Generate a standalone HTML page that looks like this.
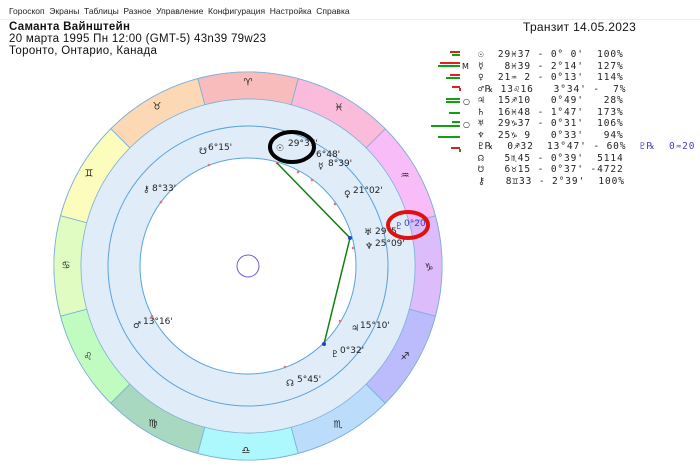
<!DOCTYPE html>
<html><head><meta charset="utf-8"><style>
html,body{margin:0;padding:0;width:700px;height:471px;overflow:hidden;background:#fff;font-family:"Liberation Sans","DejaVu Sans",sans-serif;color:#111}
.menu{position:absolute;left:9px;top:6px;font-size:8.5px;color:#222;word-spacing:2.3px;white-space:nowrap}
.mline{position:absolute;left:0;top:19px;width:700px;height:1px;background:#eee}
.hd{position:absolute;left:9px;font-size:11.5px;white-space:nowrap;letter-spacing:0.3px}
.tab{position:absolute;left:478px;top:49px;font-family:"DejaVu Sans Mono","Liberation Mono",monospace;font-size:9.5px;letter-spacing:0.9px;line-height:11.5px;white-space:pre;color:#222}
</style></head><body>
<div class="menu">Гороскоп Экраны Таблицы Разное Управление Конфигурация Настройка Справка</div>
<div class="mline"></div>
<div class="hd" style="top:21px;font-weight:bold">Саманта Вайнштейн</div>
<div class="hd" style="top:33px">20 марта 1995  Пн  12:00 (GMT-5) 43n39  79w23</div>
<div class="hd" style="top:45px">Торонто, Онтарио, Канада</div>
<div class="hd" style="left:523px;top:20px;font-size:12px">Транзит 14.05.2023</div>
<svg width="700" height="471" style="position:absolute;left:0;top:0" font-family="DejaVu Sans, sans-serif">
<circle cx="248" cy="266" r="194" fill="#e0ecf8" stroke="#7aaed8" stroke-width="1"/>
<g stroke="#7aaed8" stroke-width="0.8">
<path d="M435.4,316.2 A194,194 0 0 0 435.4,215.8 L409.3,222.8 A167,167 0 0 1 409.3,309.2Z" fill="#dcbcfa"/>
<path d="M435.4,215.8 A194,194 0 0 0 385.2,128.8 L366.1,147.9 A167,167 0 0 1 409.3,222.8Z" fill="#f8bcf8"/>
<path d="M385.2,128.8 A194,194 0 0 0 298.2,78.6 L291.2,104.7 A167,167 0 0 1 366.1,147.9Z" fill="#fbbcdc"/>
<path d="M298.2,78.6 A194,194 0 0 0 197.8,78.6 L204.8,104.7 A167,167 0 0 1 291.2,104.7Z" fill="#f8bcbc"/>
<path d="M197.8,78.6 A194,194 0 0 0 110.8,128.8 L129.9,147.9 A167,167 0 0 1 204.8,104.7Z" fill="#fcd8b4"/>
<path d="M110.8,128.8 A194,194 0 0 0 60.6,215.8 L86.7,222.8 A167,167 0 0 1 129.9,147.9Z" fill="#fcfcbc"/>
<path d="M60.6,215.8 A194,194 0 0 0 60.6,316.2 L86.7,309.2 A167,167 0 0 1 86.7,222.8Z" fill="#e0fcc0"/>
<path d="M60.6,316.2 A194,194 0 0 0 110.8,403.2 L129.9,384.1 A167,167 0 0 1 86.7,309.2Z" fill="#c0fcc0"/>
<path d="M110.8,403.2 A194,194 0 0 0 197.8,453.4 L204.8,427.3 A167,167 0 0 1 129.9,384.1Z" fill="#a8d8c0"/>
<path d="M197.8,453.4 A194,194 0 0 0 298.2,453.4 L291.2,427.3 A167,167 0 0 1 204.8,427.3Z" fill="#acf8fc"/>
<path d="M298.2,453.4 A194,194 0 0 0 385.2,403.2 L366.1,384.1 A167,167 0 0 1 291.2,427.3Z" fill="#bcdcfc"/>
<path d="M385.2,403.2 A194,194 0 0 0 435.4,316.2 L409.3,309.2 A167,167 0 0 1 366.1,384.1Z" fill="#bcbcfc"/>
</g>
<circle cx="248" cy="266" r="140" fill="none" stroke="#5aa4d8"/>
<circle cx="248" cy="266" r="108" fill="#fff" stroke="#5aa4d8"/>
<circle cx="248" cy="266" r="11" fill="none" stroke="#7060c8"/>
<g font-size="10" fill="#222" text-anchor="middle" dominant-baseline="central">
<text x="429" y="268">♑</text><text x="405" y="176">♒</text><text x="339" y="108">♓</text><text x="248" y="83">♈</text><text x="157" y="107">♉</text><text x="89" y="174">♊</text><text x="66" y="266">♋</text><text x="88" y="357">♌</text><text x="153" y="424">♍</text><text x="246" y="451">♎</text><text x="338" y="425">♏</text><text x="405" y="357">♐</text>
</g>
<g font-size="9" fill="#222">
<text x="276" y="151">☉</text><text x="288" y="146">29°37'</text>
<text x="316" y="157">6°48'</text>
<text x="318" y="169">☿</text><text x="328" y="166">8°39'</text>
<text x="344" y="197">♀</text><text x="353" y="193">21°02'</text>
<text x="364" y="235">♅</text><text x="375" y="234">29°5</text>
<text x="365" y="249">♆</text><text x="375" y="246">25°09'</text>
<text x="351" y="331">♃</text><text x="360" y="328">15°10'</text>
<text x="331" y="357">♇</text><text x="340" y="353">0°32'</text>
<text x="286" y="386">☊</text><text x="297" y="382">5°45'</text>
<text x="133" y="328">♂</text><text x="143" y="324">13°16'</text>
<text x="143" y="192">⚷</text><text x="152" y="191">8°33'</text>
<text x="199" y="154">☋</text><text x="208" y="150">6°15'</text>
<text x="395" y="229" fill="#4040d0">♇</text><text x="404" y="226" fill="#4040d0">0°20'</text>
</g>
<g fill="#f07070"><circle cx="209" cy="165" r="1.3"/><circle cx="161" cy="202" r="1.3"/><circle cx="298" cy="172" r="1.3"/><circle cx="312" cy="180" r="1.3"/><circle cx="335" cy="204" r="1.3"/><circle cx="353" cy="248" r="1.3"/><circle cx="340" cy="321" r="1.3"/><circle cx="285" cy="367" r="1.3"/><circle cx="152" cy="316" r="1.3"/><circle cx="277" cy="163" r="1.3"/></g>
<polyline points="277,163 350,238 324,344" fill="none" stroke="#108010" stroke-width="1.5"/>
<circle cx="350" cy="238" r="2" fill="#2040d0"/><circle cx="324" cy="344" r="2" fill="#2040d0"/>
<ellipse cx="292" cy="147" rx="22" ry="15" fill="none" stroke="#000" stroke-width="4"/>
<ellipse cx="408" cy="225" rx="20" ry="13" fill="none" stroke="#e01010" stroke-width="4"/>
<g>
<rect x="450" y="51" width="10" height="2" fill="#e02020"/><rect x="452" y="54" width="8" height="2" fill="#10a010"/>
<rect x="440" y="62" width="20" height="2" fill="#e02020"/><rect x="438" y="65" width="22" height="2" fill="#10a010"/>
<rect x="450" y="74" width="10" height="2" fill="#e02020"/><rect x="446" y="77" width="14" height="2" fill="#10a010"/>
<rect x="452" y="86" width="8" height="2" fill="#e02020"/><rect x="459" y="88" width="2" height="3" fill="#e02020"/>
<rect x="446" y="98" width="14" height="2" fill="#10a010"/><rect x="446" y="101" width="14" height="2" fill="#10a010"/>
<rect x="449" y="112" width="11" height="2" fill="#10a010"/>
<rect x="452" y="121" width="8" height="2" fill="#10a010"/><rect x="431" y="125" width="29" height="2" fill="#10a010"/>
<rect x="438" y="136" width="22" height="2" fill="#10a010"/>
<rect x="451" y="147" width="9" height="2" fill="#e02020"/><rect x="459" y="149" width="2" height="3" fill="#10a010"/>
</g>
<g font-size="8" fill="#222"><text x="462" y="69">М</text><text x="463" y="104">○</text><text x="463" y="127">○</text></g>
</svg>
<div class="tab">☉  29♓37 - 0° 0'  100%
☿   8♓39 - 2°14'  127%
♀  21♒ 2 - 0°13'  114%
♂℞ 13♌16   3°34' -  7%
♃  15♐10   0°49'   28%
♄  16♓48 - 1°47'  173%
♅  29♑37 - 0°31'  106%
♆  25♑ 9   0°33'   94%
♇℞  0♐32  13°47' - 60%  <span style="color:#4040d0">♇℞  0♒20</span>
☊   5♏45 - 0°39'  5114
☋   6♉15 - 0°37' -4722
⚷   8♊33 - 2°39'  100%</div>
</body></html>
